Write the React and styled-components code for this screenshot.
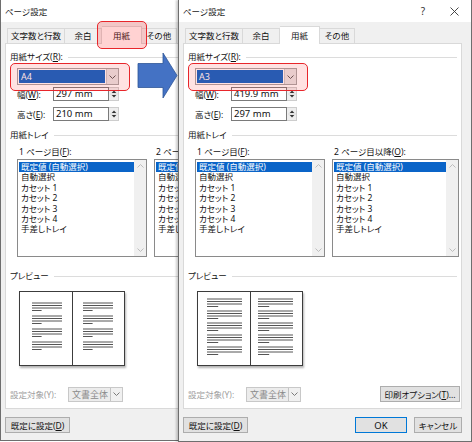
import styled, { createGlobalStyle } from 'styled-components';

const GlobalStyle = createGlobalStyle`
	html, body {
		margin: 0;
		padding: 0;
		background: #fff;
	}
	body {
		font-family: 'Noto Sans', 'Noto Sans CJK JP', sans-serif;
		font-size: 8.5px;
		color: #111;
		font-feature-settings: 'palt';
	}
`;

const Stage = styled.div`
	position: relative;
	display: flex;
	width: 472px;
	height: 442px;
	overflow: hidden;
	background: #fff;
`;

const BackClip = styled.div`
	flex: none;
	width: 178px;
	height: 100%;
	overflow: hidden;
`;

const Window = styled.div`
	flex: none;
	position: relative;
	z-index: ${p => (p.$front ? 1 : 0)};
	display: flex;
	flex-direction: column;
	width: 294px;
	box-sizing: border-box;
	border: 1px solid #6e6e6e;
	border-top: none;
	background: #f0f0f0;
	box-shadow: ${p => (p.$front ? '-2px 0 2px rgba(0, 0, 0, 0.2)' : 'none')};
`;

const TitleBar = styled.div`
	display: flex;
	align-items: center;
	height: 22px;
	padding-left: 4px;
	background: #fff;
	color: #222;
`;

const TitleText = styled.span`
	flex: 1;
`;

const CaptionButton = styled.span`
	display: flex;
	align-items: center;
	justify-content: center;
	width: ${p => p.$w}px;
	height: 22px;
	font-size: 10px;
	color: #333;
`;

const Body = styled.div`
	display: flex;
	flex-direction: column;
	padding: 4px 9px 0 4px;
`;

const TabRow = styled.div`
	position: relative;
	z-index: 1;
	display: flex;
	align-items: flex-end;
	height: 18px;
	padding-left: 2px;
	margin-bottom: -1px;
`;

const Tab = styled.div`
	position: relative;
	box-sizing: border-box;
	width: ${p => p.$w}px;
	height: ${p => (p.$active ? 18 : 16)}px;
	line-height: ${p => (p.$active ? 17 : 14)}px;
	text-align: center;
	white-space: nowrap;
	border: 1px solid #d9d9d9;
	border-bottom: ${p => (p.$active ? 'none' : '1px solid #d9d9d9')};
	background: ${p => (p.$active ? '#fff' : '#f0f0f0')};
	z-index: ${p => (p.$active ? 1 : 0)};

	& + & {
		border-left: none;
	}
`;

const Callout = styled.span`
	position: absolute;
	top: ${p => p.$t}px;
	right: ${p => p.$r}px;
	bottom: ${p => p.$b}px;
	left: ${p => p.$l}px;
	border: 1px solid #e8262b;
	border-radius: 5px;
	background: rgba(255, 30, 30, ${p => p.$alpha});
	pointer-events: none;
	z-index: 3;
`;

const Panel = styled.div`
	display: flex;
	flex-direction: column;
	height: 366px;
	box-sizing: border-box;
	border: 1px solid #d9d9d9;
	background: #fff;
`;

const GroupHead = styled.div`
	display: flex;
	align-items: center;
	height: 10px;
	line-height: 10px;
	margin-top: ${p => p.$mt}px;
	padding: 0 4px;
	white-space: nowrap;

	&::after {
		content: '';
		flex: 1;
		height: 1px;
		margin-left: 5px;
		background: #dcdcdc;
	}
`;

const ComboWrap = styled.div`
	position: relative;
	width: 102px;
	margin: 6px 0 0 11px;
`;

const Combo = styled.div`
	display: flex;
	width: ${p => p.$w}px;
	height: ${p => p.$h}px;
	box-sizing: border-box;
	border: 1px solid ${p => (p.$disabled ? '#c8c8c8' : '#a5a5a5')};
	background: ${p => (p.$disabled ? '#ececec' : '#fff')};
`;

const ComboValue = styled.div`
	flex: 1;
	margin: 1px;
	padding-left: 2px;
	font-size: 9px;
	line-height: ${p => (p.$selected ? 13 : 11)}px;
	color: ${p => (p.$disabled ? '#8a8a8a' : p.$selected ? '#fff' : '#111')};
	background: ${p => (p.$selected ? '#0a64c8' : 'transparent')};
	white-space: nowrap;
`;

const DropButton = styled.div`
	display: flex;
	align-items: center;
	justify-content: center;
	width: 11px;
	border-left: 1px solid ${p => (p.$disabled ? '#c4c4c4' : '#c9c9c9')};
	background: ${p => (p.$disabled ? '#f0f0f0' : '#e6e6e6')};
`;

const FieldRow = styled.div`
	display: flex;
	align-items: center;
	height: 14px;
	margin: ${p => p.$mt}px 0 0 11px;
`;

const FieldLabel = styled.span`
	width: 36px;
	white-space: nowrap;
`;

const NumberBox = styled.div`
	width: 56px;
	height: 14px;
	box-sizing: border-box;
	border: 1px solid #7a7a7a;
	padding-left: 2px;
	font-size: 9.5px;
	line-height: 12px;
	background: #fff;
`;

const Spin = styled.div`
	display: flex;
	align-items: center;
	justify-content: center;
	width: 10px;
	height: 14px;
	box-sizing: border-box;
	border: 1px solid #cdcdcd;
	border-left: none;
	background: #eeeeee;
`;

const TrayGrid = styled.div`
	display: grid;
	grid-template-columns: 130px 127px;
	column-gap: 7px;
	margin: 7px 0 0 11px;
`;

const TrayColumn = styled.div`
	display: flex;
	flex-direction: column;
	gap: 2px;
`;

const TrayLabel = styled.span`
	height: 10px;
	line-height: 10px;
	padding-left: 2px;
	white-space: nowrap;
`;

const ListBox = styled.div`
	display: flex;
	height: 98px;
	box-sizing: border-box;
	border: 1px solid #8a8a8a;
	background: #fff;
	overflow: hidden;
`;

const ListItems = styled.ul`
	flex: 1;
	min-width: 0;
	margin: 0;
	padding: 2px 0 0 1px;
	list-style: none;
`;

const ListItem = styled.li`
	height: 10.4px;
	line-height: 10.4px;
	padding-left: 2px;
	white-space: nowrap;
	color: ${p => (p.$selected ? '#fff' : '#111')};
	background: ${p => (p.$selected ? '#0a64c8' : 'transparent')};
`;

const ScrollBar = styled.div`
	display: flex;
	flex-direction: column;
	justify-content: space-between;
	align-items: center;
	width: 12px;
	padding: 4px 0;
	background: #f0f0f0;
`;

const Book = styled.div`
	display: flex;
	width: 106px;
	height: 75px;
	margin: 10px 0 0 13px;
	box-sizing: border-box;
	border: 1.5px solid #3c3c3c;
	background: #fff;
	box-shadow: 1px 1.5px 2px rgba(0, 0, 0, 0.3);
`;

const Leaf = styled.div`
	flex: 1;
	display: flex;

	& + & {
		border-left: 1.5px solid #3c3c3c;
	}
`;

const TargetRow = styled.div`
	display: flex;
	align-items: center;
	height: 16px;
	margin-top: 20px;
	padding: 0 1px 0 4px;
`;

const DimLabel = styled.span`
	width: 58px;
	color: #a0a0a0;
	white-space: nowrap;
`;

const Button = styled.button`
	flex: none;
	width: ${p => p.$w}px;
	height: 16px;
	margin-left: ${p => (p.$push ? 'auto' : '0')};
	padding: 0;
	box-sizing: border-box;
	border: 1px solid ${p => (p.$default ? '#0078d7' : '#adadad')};
	background: #e1e1e1;
	font: inherit;
	font-size: ${p => (p.$latin ? 9.5 : 8.5)}px;
	color: #111;
	white-space: nowrap;
`;

const Footer = styled.div`
	display: flex;
	gap: 7px;
	height: 16px;
	padding: 8px 0 7px;
`;

const ArrowMark = styled.svg`
	position: absolute;
	left: 136px;
	top: 52px;
	z-index: 2;
`;

const TRAY_ITEMS = [
	'既定値 (自動選択)',
	'自動選択',
	'カセット 1',
	'カセット 2',
	'カセット 3',
	'カセット 4',
	'手差しトレイ',
];

function Chevron({ color = '#5a5a5a', up = false }) {
	return (
		<svg width="7" height="4" viewBox="0 0 7 4">
			<polyline
				points={up ? '0.5,3.5 3.5,0.5 6.5,3.5' : '0.5,0.5 3.5,3.5 6.5,0.5'}
				fill="none"
				stroke={color}
				strokeWidth="1"
			/>
		</svg>
	);
}

function SpinArrows() {
	return (
		<svg width="8" height="12" viewBox="0 0 8 12">
			<path d="M4 2.5 L6.3 5 L1.7 5 Z" fill="#333" />
			<line x1="0" y1="6" x2="8" y2="6" stroke="#d4d4d4" strokeWidth="0.8" />
			<path d="M1.7 7 L6.3 7 L4 9.5 Z" fill="#333" />
		</svg>
	);
}

function CloseIcon() {
	return (
		<svg width="9" height="9" viewBox="0 0 9 9">
			<path d="M0.5 0.5 L8.5 8.5 M8.5 0.5 L0.5 8.5" stroke="#333" strokeWidth="0.9" />
		</svg>
	);
}

function TextLines({ groups, pitch, top, x, width }) {
	const lines = [];
	for (let g = 0; g < groups; g++) {
		for (let i = 0; i < 4; i++) {
			const y = top + g * pitch + i * 2.5;
			const w = i === 3 ? width * 0.32 : width;
			lines.push(<line key={`${g}-${i}`} x1={x} x2={x + w} y1={y} y2={y} />);
		}
	}
	return (
		<svg width="100%" height="100%">
			<g stroke="#555" strokeWidth="1">{lines}</g>
		</svg>
	);
}

function TrayList() {
	return (
		<ListBox>
			<ListItems>
				{TRAY_ITEMS.map((item, i) => (
					<ListItem key={item} $selected={i === 0}>
						{item}
					</ListItem>
				))}
			</ListItems>
			<ScrollBar>
				<Chevron color="#bdbdbd" up />
				<Chevron color="#bdbdbd" />
			</ScrollBar>
		</ListBox>
	);
}

// the covered window behind only needs the parts that still show
function PageSetupDialog({ front, size, width, height, lines, markTab }) {
	return (
		<Window $front={front}>
			<TitleBar>
				<TitleText>ページ設定</TitleText>
				{front && (
					<>
						<CaptionButton $w={30}>?</CaptionButton>
						<CaptionButton $w={33}>
							<CloseIcon />
						</CaptionButton>
					</>
				)}
			</TitleBar>
			<Body>
				<TabRow>
					<Tab $w={58}>文字数と行数</Tab>
					<Tab $w={37}>余白</Tab>
					<Tab $w={40} $active>
						用紙
						{markTab && <Callout $t={-6} $r={-6} $b={-5} $l={-5} $alpha={0.2} />}
					</Tab>
					<Tab $w={35}>その他</Tab>
				</TabRow>
				<Panel>
					<GroupHead $mt={8}>
						<span>
							用紙サイズ(<u>R</u>):
						</span>
					</GroupHead>
					<ComboWrap>
						<Combo $w={102} $h={17}>
							<ComboValue $selected>{size}</ComboValue>
							<DropButton>
								<Chevron />
							</DropButton>
						</Combo>
						<Callout $t={-5} $r={-11} $b={-6} $l={-7} $alpha={0.13} />
					</ComboWrap>
					<FieldRow $mt={2}>
						<FieldLabel>
							幅(<u>W</u>):
						</FieldLabel>
						<NumberBox>{width}</NumberBox>
						<Spin>
							<SpinArrows />
						</Spin>
					</FieldRow>
					<FieldRow $mt={6}>
						<FieldLabel>
							高さ(<u>E</u>):
						</FieldLabel>
						<NumberBox>{height}</NumberBox>
						<Spin>
							<SpinArrows />
						</Spin>
					</FieldRow>

					<GroupHead $mt={9}>
						<span>用紙トレイ</span>
					</GroupHead>
					<TrayGrid>
						<TrayColumn>
							<TrayLabel>
								1 ページ目(<u>F</u>):
							</TrayLabel>
							<TrayList />
						</TrayColumn>
						<TrayColumn>
							<TrayLabel>
								{front ? (
									<>
										2 ページ目以降(<u>O</u>):
									</>
								) : (
									'2 ページ'
								)}
							</TrayLabel>
							<TrayList />
						</TrayColumn>
					</TrayGrid>

					<GroupHead $mt={14}>
						<span>プレビュー</span>
					</GroupHead>
					<Book>
						<Leaf>
							<TextLines {...lines} x={lines.x} />
						</Leaf>
						<Leaf>
							<TextLines {...lines} x={lines.x - 2} />
						</Leaf>
					</Book>

					<TargetRow>
						<DimLabel>設定対象(Y):</DimLabel>
						<Combo $w={55} $h={15} $disabled>
							<ComboValue $disabled>文書全体</ComboValue>
							<DropButton $disabled>
								<Chevron color="#7a7a7a" />
							</DropButton>
						</Combo>
						{front && (
							<Button $w={80} $push>
								印刷オプション(<u>T</u>)...
							</Button>
						)}
					</TargetRow>
				</Panel>
				<Footer>
					<Button $w={65}>
						既定に設定(<u>D</u>)
					</Button>
					{front && (
						<>
							<Button $w={52} $push $default $latin>
								OK
							</Button>
							<Button $w={48}>キャンセル</Button>
						</>
					)}
				</Footer>
			</Body>
		</Window>
	);
}

function App() {
	return (
		<>
			<GlobalStyle />
			<Stage>
				<BackClip>
					<PageSetupDialog
						size="A4"
						width="297 mm"
						height="210 mm"
						lines={{ groups: 4, pitch: 13, top: 11, x: 12, width: 30 }}
						markTab
					/>
				</BackClip>
				<PageSetupDialog
					front
					size="A3"
					width="419.9 mm"
					height="297 mm"
					lines={{ groups: 5, pitch: 12, top: 7, x: 9, width: 35 }}
				/>
				<ArrowMark width="44" height="48" viewBox="0 0 44 48">
					<path
						d="M2 11.5 L27 11.5 L27 1 L41 23.5 L27 46 L27 35.5 L2 35.5 Z"
						fill="#4472c4"
						stroke="#2f5597"
						strokeWidth="0.8"
					/>
				</ArrowMark>
			</Stage>
		</>
	);
}

export default App;
